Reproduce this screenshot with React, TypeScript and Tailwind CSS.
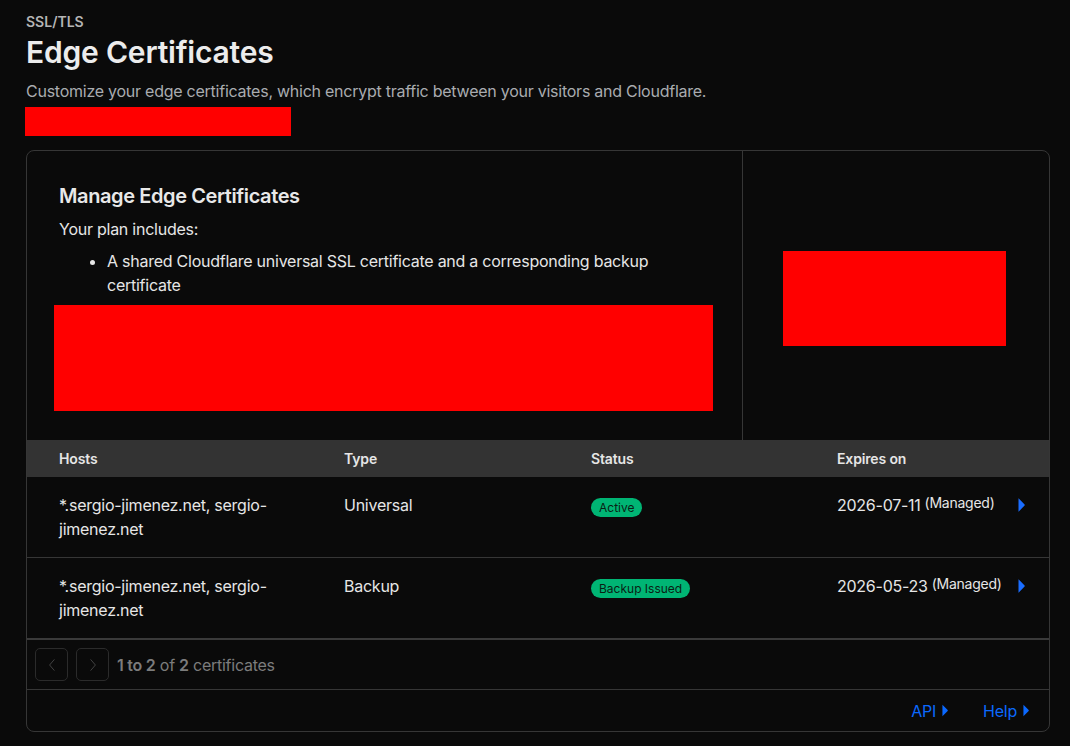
import React from "react";

const rows = [
  { hosts: "*.sergio-jimenez.net, sergio-jimenez.net", type: "Universal", status: "Active", date: "2026-07-11" },
  { hosts: "*.sergio-jimenez.net, sergio-jimenez.net", type: "Backup", status: "Backup Issued", date: "2026-05-23" },
];

function Caret({ className }: { className?: string }) {
  return (
    <svg viewBox="0 0 7 14" className={className} fill="currentColor">
      <path d="M0.5 0.5 Q0 0 0.8 0.6 L6.6 6.4 Q7 7 6.6 7.6 L0.8 13.4 Q0 14 0.5 13.5 Z" />
    </svg>
  );
}

export default function App() {
  return (
    <div
      className="min-h-[746px] bg-[#0a0a0a] text-[#e6e6e6] pl-[26px] pr-[20px] pt-[12px] pb-[14px] tracking-[-0.25px]"
      style={{ fontFamily: "Inter, 'Noto Sans', sans-serif" }}
    >
      <div className="text-[14px] font-semibold text-[#b5b5b5] leading-[20px] tracking-normal">SSL/TLS</div>
      <h1 className="text-[30px] font-semibold leading-[40px] text-[#ececec] tracking-[-0.2px]">Edge Certificates</h1>
      <p className="mt-[8px] text-[16px] leading-[22px] text-[#a9acb0]">
        Customize your edge certificates, which encrypt traffic between your visitors and Cloudflare.
      </p>
      <div className="mt-[5px] ml-[-1px] h-[29px] w-[266px] bg-[#ff0000]" />

      <div className="mt-[14px] rounded-[8px] border border-[#363636] overflow-hidden">
        <div className="flex h-[289px]">
          <div className="w-[716px] border-r border-[#363636] pl-[32px] pr-[29px] pt-[32px]">
            <h2 className="text-[20px] font-semibold leading-[26px] text-[#e8e8e8] tracking-[-0.4px]">
              Manage Edge Certificates
            </h2>
            <p className="mt-[8px] text-[16px] leading-[24px]">Your plan includes:</p>
            <ul className="mt-[8px] list-disc pl-[48px] text-[16px] leading-[24px]">
              <li>A shared Cloudflare universal SSL certificate and a corresponding backup certificate</li>
            </ul>
            <div className="mt-[8px] ml-[-5px] h-[106px] w-[659px] bg-[#ff0000]" />
          </div>
          <div className="flex-1 flex items-center justify-center">
            <div className="mt-[6px] ml-[-4px] h-[95px] w-[223px] bg-[#ff0000]" />
          </div>
        </div>

        <div className="grid grid-cols-[285px_247px_246px_1fr] h-[37px] items-center bg-[#333333] pl-[32px] text-[14px] font-semibold tracking-[-0.15px]">
          <div>Hosts</div>
          <div>Type</div>
          <div>Status</div>
          <div>Expires on</div>
        </div>

        {rows.map((r, i) => (
          <div
            key={i}
            className={`grid grid-cols-[285px_247px_246px_1fr] pl-[32px] pr-[24px] py-[16px] text-[16px] leading-[24px] ${
              i === 0 ? "border-b border-[#363636]" : "border-b-2 border-[#3a3a3a]"
            }`}
          >
            <div className="pr-[60px]">{r.hosts}</div>
            <div>{r.type}</div>
            <div className="pt-[4px] leading-[19px]">
              <span className="inline-block rounded-full bg-[#00b574] px-[8px] text-[12px] leading-[19px] text-[#0a1f15] tracking-normal">
                {r.status}
              </span>
            </div>
            <div className="flex items-start justify-between">
              <div className="whitespace-nowrap">
                {r.date}
                <span className="ml-[4px] align-top text-[14px] leading-[20px]">(Managed)</span>
              </div>
              <Caret className="mt-[5px] h-[14px] w-[7px] shrink-0 text-[#1a6dff]" />
            </div>
          </div>
        ))}

        <div className="flex h-[50px] items-center gap-[8px] border-b border-[#363636] pl-[8px]">
          <button className="flex h-[33px] w-[33px] items-center justify-center rounded-[5px] border border-[#2b2b2b] text-[#454545]">
            <svg viewBox="0 0 10 16" className="h-[14px] w-[8px]" fill="none" stroke="currentColor" strokeWidth="1.2">
              <path d="M8 1 L2 8 L8 15" />
            </svg>
          </button>
          <button className="flex h-[33px] w-[33px] items-center justify-center rounded-[5px] border border-[#2b2b2b] text-[#454545]">
            <svg viewBox="0 0 10 16" className="h-[14px] w-[8px]" fill="none" stroke="currentColor" strokeWidth="1.2">
              <path d="M2 1 L8 8 L2 15" />
            </svg>
          </button>
          <span className="text-[16px] text-[#7c7c7c]">
            <b className="font-semibold">1 to 2</b> of <b className="font-semibold">2</b> certificates
          </span>
        </div>

        <div className="flex h-[41px] items-center justify-end gap-[35px] pr-[20px] text-[16px] text-[#0b69ff]">
          <span className="flex items-center gap-[6px]">
            API
            <Caret className="h-[13px] w-[6px] shrink-0" />
          </span>
          <span className="flex items-center gap-[6px]">
            Help
            <Caret className="h-[13px] w-[6px] shrink-0" />
          </span>
        </div>
      </div>
    </div>
  );
}
